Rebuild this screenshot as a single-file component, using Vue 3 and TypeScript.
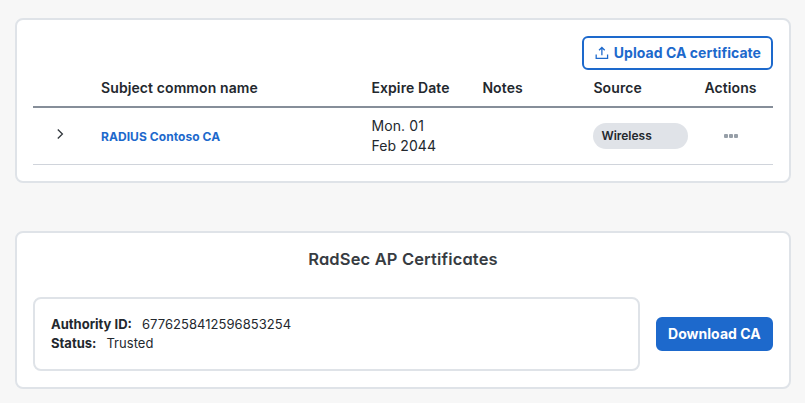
<script setup lang="ts">
interface CaRow {
  name: string
  expires: string[]
  notes: string
  source: string
}

const rows: CaRow[] = [
  { name: 'RADIUS Contoso CA', expires: ['Mon. 01', 'Feb 2044'], notes: '', source: 'Wireless' },
]
const details = [
  { label: 'Authority ID:', value: '6776258412596853254' },
  { label: 'Status:', value: 'Trusted' },
]
</script>

<template>
  <main class="page">
    <section class="card ca-card">
      <div class="toolbar">
        <button class="btn outline" type="button">
          <svg width="14" height="14" viewBox="0 0 14 14" fill="none" stroke="currentColor" stroke-width="1.3" aria-hidden="true">
            <path d="M7 9.3V1.5M4.1 4.2 7 1.4l2.9 2.8M1.2 8.6v3.8h11.6V8.6" />
          </svg>
          <span>Upload CA certificate</span>
        </button>
      </div>
      <div class="row head">
        <span></span>
        <span>Subject common name</span>
        <span>Expire Date</span>
        <span>Notes</span>
        <span>Source</span>
        <span>Actions</span>
      </div>
      <div v-for="row in rows" :key="row.name" class="row body">
        <svg class="chevron" width="8" height="12" viewBox="0 0 8 12" fill="none" stroke="#33383e" stroke-width="1.3" aria-hidden="true">
          <path d="m1.8 1.5 4.6 4.5-4.6 4.5" />
        </svg>
        <a class="link">{{ row.name }}</a>
        <div class="date"><div v-for="part in row.expires" :key="part">{{ part }}</div></div>
        <span>{{ row.notes }}</span>
        <span class="pill">{{ row.source }}</span>
        <span class="dots"><i></i><i></i><i></i></span>
      </div>
    </section>

    <section class="card rad-card">
      <h2>RadSec AP Certificates</h2>
      <div class="rad-content">
        <div class="info">
          <div v-for="item in details" :key="item.label" class="detail">
            <strong>{{ item.label }}</strong><span>{{ item.value }}</span>
          </div>
        </div>
        <button class="btn solid" type="button">Download CA</button>
      </div>
    </section>
  </main>
</template>

<style>
body { background: #f7f7f7; }
</style>

<style scoped>
.page {
  box-sizing: border-box;
  height: 403px;
  padding: 18px 14px 14px 15px;
  display: flex;
  flex-direction: column;
  justify-content: space-between;
  background: #f7f7f7;
  color: #23282e;
  font-family: Inter, sans-serif;
}
.card {
  box-sizing: border-box;
  padding: 16px;
  border: 2px solid #dfe3e8;
  border-radius: 8px;
  background: #fff;
}
.ca-card { height: 165px; }
.rad-card { height: 158px; }
.toolbar { display: flex; justify-content: flex-end; }
.btn {
  box-sizing: border-box;
  height: 34px;
  padding: 0 10px;
  display: flex;
  align-items: center;
  gap: 5px;
  border: 2px solid #1d69cc;
  border-radius: 6px;
  font: 700 14px/20px Inter, sans-serif;
  letter-spacing: 0.04px;
  white-space: nowrap;
}
.outline { width: 191px; padding-left: 11px; background: #fff; color: #1d69cc; }
.solid { width: 117px; background: #1d69cc; color: #fff; }
.row {
  box-sizing: border-box;
  display: grid;
  grid-template-columns: 68px 270.4px 111px 111px 111px 68.6px;
  align-items: center;
}
.head {
  height: 38px;
  padding-bottom: 2px;
  border-bottom: 2px solid #868e99;
  font-size: 14px;
  font-weight: 600;
  letter-spacing: 0.1px;
}
.body { height: 57px; border-bottom: 1px solid #d0d4db; font-size: 14px; line-height: 20px; }
.chevron { margin: -4px 0 0 22.5px; }
.link { padding-top: 2px; color: #1d69cc; font-size: 12px; font-weight: 700; letter-spacing: 0.06px; }
.date { letter-spacing: 0.12px; }
.pill {
  box-sizing: border-box;
  width: 95px;
  height: 26px;
  padding-left: 8px;
  border-radius: 13px;
  background: #e0e3e8;
  font-size: 12px;
  line-height: 26px;
  font-weight: 600;
}
.dots { display: flex; gap: 1px; padding-left: 19.6px; }
.dots i { width: 4px; height: 4px; border-radius: 1px; background: #979fa8; }
h2 {
  margin: 0;
  color: #373c42;
  text-align: center;
  font-size: 16.5px;
  line-height: 20px;
  font-weight: 600;
  letter-spacing: 0.15px;
  font-feature-settings: "cv11" 1;
}
.rad-content { display: flex; align-items: center; gap: 16px; margin-top: 28px; }
.info {
  box-sizing: border-box;
  flex: 1;
  height: 74px;
  padding: 16px;
  border: 2px solid #dfe3e8;
  border-radius: 8px;
  font-size: 13px;
  line-height: 19px;
}
.detail { display: flex; gap: 10px; }
.detail strong { font-weight: 700; }
.detail span { letter-spacing: 0.05px; }
</style>
